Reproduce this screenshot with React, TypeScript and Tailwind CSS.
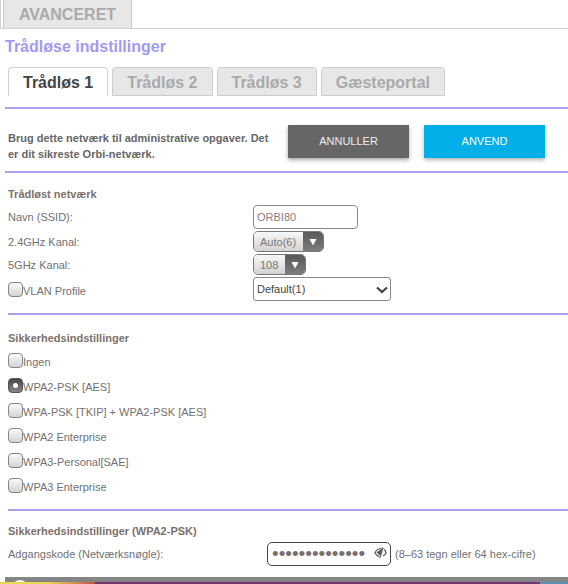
import React, { useState } from 'react';

const tabs = ['Trådløs 1', 'Trådløs 2', 'Trådløs 3', 'Gæsteportal'];

const securityModes = [
  'Ingen',
  'WPA2-PSK [AES]',
  'WPA-PSK [TKIP] + WPA2-PSK [AES]',
  'WPA2 Enterprise',
  'WPA3-Personal[SAE]',
  'WPA3 Enterprise',
];

const boxClass =
  'size-[15px] shrink-0 appearance-none rounded-[4px] border border-[#858585] bg-linear-to-b from-[#fafafa] to-[#d4d4d4]';

interface ChannelSelectProps {
  id: string;
  options: string[];
  className: string;
}

const ChannelSelect: React.FC<ChannelSelectProps> = ({ id, options, className }) => (
  <div className={`relative h-[21px] overflow-hidden rounded-[5px] border border-[#777] ${className}`}>
    <select
      id={id}
      className="block h-full w-full appearance-none bg-linear-to-b from-[#f8f8f8] to-[#d2d2d2] pl-1.5 pr-5 text-[11px] text-[#777] outline-none"
    >
      {options.map((o) => (
        <option key={o}>{o}</option>
      ))}
    </select>
    <span className="pointer-events-none absolute inset-y-0 right-0 flex w-5 items-center justify-center bg-linear-to-b from-[#595959] to-[#7c7c7c]">
      <svg className="h-2 w-2" viewBox="0 0 8 8" fill="#fff">
        <path d="M.5 1h7L4 7.500z" />
      </svg>
    </span>
  </div>
);

export default function App() {
  const [tab, setTab] = useState(0);
  const [mode, setMode] = useState(1);
  const [ssid, setSsid] = useState('ORBI80');
  const [password, setPassword] = useState('netvaerkskode1');

  return (
    <div className="overflow-hidden bg-white font-['Liberation_Sans',Arial,sans-serif] text-[11px] leading-4 text-[#717171]">
      <header className="flex h-[29px] gap-0.5 border-b border-[#d2d2d2]">
        <div className="w-px bg-[#d2d2d2]" />
        <button className="w-[129px] border-x border-[#cacaca] bg-[#e7e7e7] pt-0.5 text-base font-bold text-[#aaa]">
          AVANCERET
        </button>
      </header>

      <main className="pl-[5px]">
        <h1 className="mt-2 text-base leading-5 font-bold text-[#a29af0]">Trådløse indstillinger</h1>

        <nav className="mt-[10px] flex gap-1 pl-[3px]">
          {tabs.map((t, i) => (
            <button
              key={t}
              onClick={() => setTab(i)}
              className={
                i === tab
                  ? 'h-[29px] rounded-t-[4px] border border-b-0 border-[#d0d0d0] bg-white px-[14px] pt-0.5 text-base font-bold whitespace-nowrap text-[#444]'
                  : 'h-[29px] rounded-t-[4px] border border-[#cdcdcd] bg-[#e7e7e7] px-[14px] pt-0.5 text-base font-bold whitespace-nowrap text-[#aaa]'
              }
            >
              {t}
            </button>
          ))}
        </nav>

        <section className="mt-[11px] flex h-[66px] items-center border-y-2 border-[#a9a0ee] pt-0.5 pl-[3px]">
          <p className="mt-2.5 w-[280px] pr-2.5 font-bold text-[#666]">
            Brug dette netværk til administrative opgaver. Det er dit sikreste Orbi-netværk.
          </p>
          <div className="flex gap-[15px]">
            <button className="h-[33px] w-[121px] bg-[#666] text-[#eee] shadow-[0_2px_4px_rgba(0,0,0,0.35)]">
              ANNULLER
            </button>
            <button className="h-[33px] w-[121px] bg-[#00aee8] text-white shadow-[0_2px_4px_rgba(0,0,0,0.3)]">
              ANVEND
            </button>
          </div>
        </section>

        <div className="pl-[3px]">
          <section className="border-b-2 border-[#a9a0ee] pt-[13px] pb-3">
            <h2 className="mb-[3px] font-bold text-[#7d706b]">Trådløst netværk</h2>
            <div className="grid grid-cols-[245px_1fr] items-center gap-y-0.5">
              <label htmlFor="ssid">Navn (SSID):</label>
              <input
                id="ssid"
                value={ssid}
                onChange={(e) => setSsid(e.target.value)}
                className="h-6 w-[105px] rounded-[4px] border border-[#888] px-[3px] text-[#8a7d78]"
              />
              <label htmlFor="ch24">2.4GHz Kanal:</label>
              <ChannelSelect id="ch24" options={['Auto(6)', '1', '6', '11']} className="w-[71px]" />
              <label htmlFor="ch5">5GHz Kanal:</label>
              <ChannelSelect id="ch5" options={['108', '100', '104', '112']} className="w-[53px]" />
              <div className="flex items-center">
                <input id="vlan" type="checkbox" className={`${boxClass} checked:from-[#555] checked:to-[#777]`} />
                <label htmlFor="vlan" className="pt-1">VLAN Profile</label>
              </div>
              <div className="relative w-[138px]">
                <select
                  aria-label="VLAN Profile"
                  className="block h-6 w-full appearance-none rounded-[3px] border border-[#888] bg-white pl-[3px] text-[#444]"
                >
                  <option>Default(1)</option>
                </select>
                <svg
                  className="pointer-events-none absolute top-[9px] right-[3px] h-2 w-3"
                  viewBox="0 0 12 8"
                  fill="none"
                  stroke="#444"
                  strokeWidth="2.2"
                >
                  <path d="M1 1.5l5 4.5 5-4.5" />
                </svg>
              </div>
            </div>
          </section>

          <section
            role="radiogroup"
            aria-labelledby="security-title"
            className="border-b-2 border-[#a9a0ee] pt-[15px] pb-[11px]"
          >
            <h2 id="security-title" className="mb-0.5 font-bold text-[#7d706b]">Sikkerhedsindstillinger</h2>
            {securityModes.map((m, i) => (
              <label key={m} className="flex h-[25px] items-center">
                <span className="relative flex">
                  <input
                    type="radio"
                    name="security"
                    checked={mode === i}
                    onChange={() => setMode(i)}
                    className={`${boxClass} peer checked:border-[#555] checked:from-[#484848] checked:to-[#858585]`}
                  />
                  <span className="pointer-events-none absolute inset-0 m-auto hidden size-[5px] rounded-full bg-white peer-checked:block" />
                </span>
                <span className="pt-[3px]">{m}</span>
              </label>
            ))}
          </section>

          <section className="pt-3">
            <h2 className="mb-[3px] font-bold text-[#7d706b]">Sikkerhedsindstillinger (WPA2-PSK)</h2>
            <div className="flex items-center">
              <label htmlFor="psk" className="w-[259px]">Adgangskode (Netværksnøgle):</label>
              <div className="relative mr-1">
                <input
                  id="psk"
                  type="password"
                  value={password}
                  onChange={(e) => setPassword(e.target.value)}
                  className="block h-6 w-[124px] rounded-[5px] border border-[#444] pr-[18px] pl-1 text-[19px] text-[#77706d]"
                />
                <button aria-label="Vis adgangskode" className="absolute top-[5px] right-1 h-3 w-[13px]">
                  <svg viewBox="0 0 13 12" fill="none" stroke="#555" strokeWidth="1.2">
                    <path d="M7.500 1.500C4.500 1.500 2 3.500 1 6c1 1.800 2.300 2.800 4 3.300" />
                    <path d="M10 2.500c1 .8 1.800 2 2.200 3.200-.6 1.300-1.700 2.500-3.200 3.300" />
                    <path d="M9 .5L5.800 11.200" />
                    <path d="M3.200 5.200l4.300-3-1 5.300c-1.600.2-3-.8-3.300-2.300z" fill="#555" strokeWidth=".6" />
                  </svg>
                </button>
              </div>
              <span className="whitespace-nowrap">(8–63 tegn eller 64 hex-cifre)</span>
            </div>
          </section>
        </div>
      </main>

      <footer className="mt-[11px]">
        <div className="ml-[5px] h-[5px] overflow-hidden bg-[#858585] pl-[7px]">
          <div className="mt-[3px] h-4 w-4 rounded-full bg-white" />
        </div>
        <div className="flex h-0.5">
          <div className="w-1/6 bg-linear-to-r from-[#e5d84a] from-50% to-[#c0504a]" />
          <div className="flex-1 bg-[#70386f]" />
          <div className="w-[5%] bg-[#5f93b5]" />
        </div>
      </footer>
    </div>
  );
}
